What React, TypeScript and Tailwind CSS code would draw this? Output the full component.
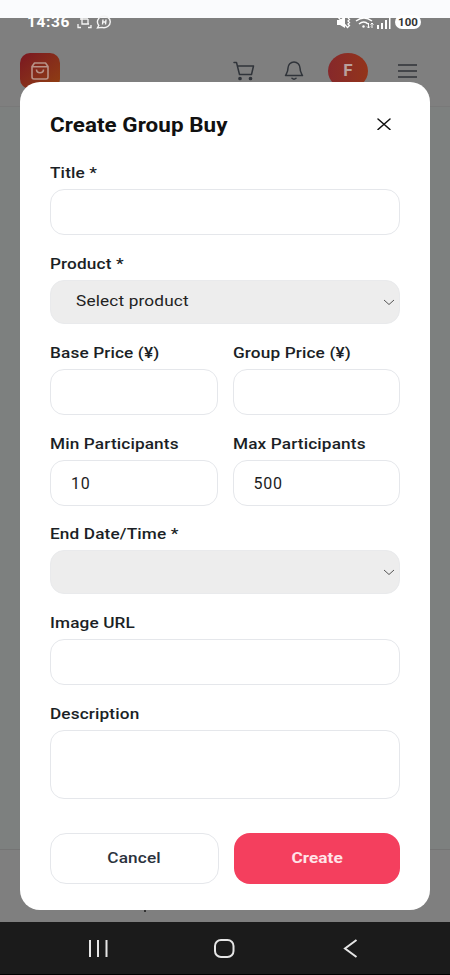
import React, { useState } from 'react';

interface FieldProps {
  label: string;
  children: React.ReactNode;
  className?: string;
}

const inputClass =
  'block w-full h-[46px] rounded-[14px] border border-[#e5e7eb] bg-white px-5 text-[16px] tracking-[0.8px] text-[#1c1c1c] outline-none';

const Field: React.FC<FieldProps> = ({ label, children, className = '' }) => (
  <div className={className}>
    <label className="block w-fit h-6 mb-1 text-[15.5px] leading-6 font-medium tracking-[0.12px] text-[#1b1f26] whitespace-nowrap origin-left scale-x-[1.11]">
      {label}
    </label>
    {children}
  </div>
);

const SelectBox: React.FC<{ value: string }> = ({ value }) => (
  <button
    type="button"
    className="flex items-center justify-between w-full h-[44px] rounded-[14px] border border-[#e9eaec] bg-[#ededed] pl-[25px] pr-1 text-[15.5px] tracking-[0.15px] text-[#222]"
  >
    <span className="origin-left scale-x-[1.11]">{value}</span>
    <svg width="12" height="7" viewBox="0 0 12 7" fill="none" stroke="#555" strokeWidth="1">
      <path d="M1 1l5 4.5L11 1" />
    </svg>
  </button>
);

const StatusBar = () => (
  <div className="flex items-start justify-between h-[26px] pl-[27px] pr-[29px] text-white">
    <div className="flex items-center h-3 -mt-[2px]">
      <span className="w-[42px] text-[15.5px] font-bold tracking-[0.6px] leading-[18px]">14:36</span>
      <svg className="ml-2" width="15" height="14" viewBox="0 0 15 14" fill="none" stroke="#f4f4f4" strokeWidth="1.3">
        <path d="M5 3v6h6V4M3 4h8M9 9h3M1 9v3.500h3M11 12.500h3V10" />
      </svg>
      <svg className="ml-1" width="16" height="15" viewBox="0 0 16 15" fill="none" stroke="#f4f4f4" strokeWidth="1.4">
        <path d="M2.800 10.400A6.400 5.800 0 1 1 6 12.400L1.500 13z" />
        <path d="M7 4.500L6.500 9.500M10 4.500L9.500 9.500M7 7h3" />
      </svg>
    </div>
    <div className="flex items-center h-3 -mt-[2px]">
      <svg className="-mr-px" width="16" height="13" viewBox="0 0 16 13" fill="#fff">
        <path d="M1 4h3l5-4v12L4 9H1z" />
        <path d="M12 2l1.500 1.500L12 5l1.500 1.500L12 8l1.500 1.500L12 11M1 0l11 12" stroke="#fff" strokeWidth="1.300" fill="none" />
      </svg>
      <svg className="ml-1" width="20" height="13" viewBox="0 0 20 13" fill="none" stroke="#fff" strokeWidth="1.5">
        <path d="M1 5q8-6 16 0M4 8q5-4 9 0" />
        <circle cx="8.500" cy="10.500" r="1.200" fill="#fff" stroke="none" />
        <path d="M13.500 7v5M12 10.500l1.500 1.500 1.500-1.500M17 12V7M15.500 8.500L17 7l1.500 1.500" strokeWidth="1" />
      </svg>
      <svg className="ml-[2px]" width="14" height="13" viewBox="0 0 14 13" fill="#fff">
        <path d="M0 9h2v4H0zM4 7h2v6H4zM8 4h2v9H8zM12 0h1.500v13H12z" />
      </svg>
      <span className="ml-1 flex items-center justify-center w-[26px] h-[14px] rounded-full bg-white text-[11.5px] font-bold leading-[14px] tracking-[0.1px] text-[#333]">
        100
      </span>
    </div>
  </div>
);

const AppHeader = () => (
  <div className="flex items-start justify-between h-[63px] pl-5 pr-8 pt-[9px] border-b border-[#797979]">
    <div className="flex items-center justify-center w-10 h-[36px] rounded-[10px] bg-linear-to-br from-[#7a1520] to-[#91400f]">
      <svg width="18" height="18" viewBox="0 0 18 18" fill="none" stroke="#b89287" strokeWidth="1.6" strokeLinejoin="round">
        <path d="M1 4.500L3.500 1h11L17 4.500V15q0 2-2 2H3q-2 0-2-2zM1 4.700h16" />
        <path d="M5.500 7.500q0 3.200 3.500 3.200t3.500-3.200" />
      </svg>
    </div>
    <div className="flex items-start">
      <svg className="mt-2" width="22" height="20" viewBox="0 0 22 20" fill="none" stroke="#30343a" strokeWidth="1.5" strokeLinecap="round" strokeLinejoin="round">
        <path d="M1 1.500h2.500L6.500 13.500h12L20.500 5H4.500" />
        <circle cx="7" cy="17.500" r="1.100" fill="#30343a" />
        <circle cx="17.500" cy="17.500" r="1.100" fill="#30343a" />
      </svg>
      <svg className="mt-2 ml-[29px]" width="20" height="20" viewBox="0 0 20 20" fill="none" stroke="#30343a" strokeWidth="1.5" strokeLinecap="round" strokeLinejoin="round">
        <path d="M4 7a6 6 0 0 1 12 0c0 4 1.500 5.500 2.500 7.500H1.500C2.500 12.500 4 11 4 7z" />
        <path d="M8 17.300q2 1.800 4 0" />
      </svg>
      <div className="ml-6 w-10 h-[36px] rounded-[50%] bg-linear-to-r from-[#86282a] to-[#933419] text-center text-[17px] leading-[35px] font-bold text-[#b9a09c]">
        F
      </div>
      <svg className="mt-[11px] ml-[30px]" width="20" height="14" viewBox="0 0 20 14" stroke="#303338" strokeWidth="1.6">
        <path d="M0 1h19M0 7h19M0 13h19" />
      </svg>
    </div>
  </div>
);

const SystemNav = () => (
  <div className="h-[53px] bg-[#1b1b1b] border-b border-black">
    <svg width="450" height="52" viewBox="0 0 450 52" fill="none" stroke="#e6e6e6" strokeWidth="2">
      <path d="M90 18v17M98 18v17M106.500 18v17" />
      <rect x="215" y="18" width="18.500" height="17" rx="6" />
      <path d="M356.500 18l-11.500 8.500L356.500 35" />
    </svg>
  </div>
);

export default function App() {
  const [minParticipants, setMinParticipants] = useState('10');
  const [maxParticipants, setMaxParticipants] = useState('500');

  return (
    <div className="relative flex flex-col w-[450px] h-[975px] overflow-hidden bg-[#7d807f] font-['Roboto',sans-serif]">
      <div className="h-[18px] bg-[#fafbfd]" />
      <div className="bg-[#7f7f7f]">
        <StatusBar />
        <AppHeader />
      </div>
      <div className="flex-1" />
      <div className="h-[73px] border-t border-[#747474] bg-[#7f7f7f] pl-[144px] pt-[60px]">
        <div className="w-[2px] h-[2px] bg-[#333]" />
      </div>
      <SystemNav />

      {/* Modal */}
      <div className="absolute left-5 top-[82px] w-[410px] h-[828px] rounded-[20px] bg-white px-[30px] pt-[27px]">
        <div className="flex items-center justify-between h-[30px] pr-[9px]">
          <h2 className="pt-px text-[20px] font-bold tracking-[0.05px] text-[#111] whitespace-nowrap origin-left scale-x-[1.12]">
            Create Group Buy
          </h2>
          <button type="button" aria-label="Close">
            <svg width="14" height="12" viewBox="0 0 14 12" fill="none" stroke="#111" strokeWidth="1.5" strokeLinecap="round">
              <path d="M1 1l12 10.500M13 1L1 11.500" />
            </svg>
          </button>
        </div>

        <form className="mt-[22px]">
          <Field label="Title *" className="mb-[17px]">
            <input className={inputClass} />
          </Field>
          <Field label="Product *" className="mb-[17px]">
            <SelectBox value="Select product" />
          </Field>
          <div className="grid grid-cols-2 gap-x-[15px] gap-y-[17px] mb-4">
            <Field label="Base Price (¥)">
              <input className={inputClass} />
            </Field>
            <Field label="Group Price (¥)">
              <input className={inputClass} />
            </Field>
            <Field label="Min Participants">
              <input className={inputClass} value={minParticipants} onChange={(e) => setMinParticipants(e.target.value)} />
            </Field>
            <Field label="Max Participants">
              <input className={inputClass} value={maxParticipants} onChange={(e) => setMaxParticipants(e.target.value)} />
            </Field>
          </div>
          <Field label="End Date/Time *" className="mb-[17px]">
            <SelectBox value="" />
          </Field>
          <Field label="Image URL" className="mb-[17px]">
            <input className={inputClass} />
          </Field>
          <Field label="Description">
            <textarea className="block w-full h-[69px] resize-none rounded-[14px] border border-[#e5e7eb] px-5 py-3 outline-none" />
          </Field>

          <div className="flex gap-[15px] mt-[34px]">
            <button type="button" className="w-[169px] h-[51px] rounded-[16px] border border-[#e5e7eb] text-[15.5px] font-medium tracking-[0.12px] text-[#2b323d]">
              <span className="inline-block scale-x-[1.11]">Cancel</span>
            </button>
            <button type="button" className="flex-1 h-[51px] rounded-[16px] bg-[#f43f5e] text-[15.5px] font-bold tracking-[0.05px] text-[#ffe4e8]">
              <span className="inline-block scale-x-[1.11]">Create</span>
            </button>
          </div>
        </form>
      </div>
    </div>
  );
}
